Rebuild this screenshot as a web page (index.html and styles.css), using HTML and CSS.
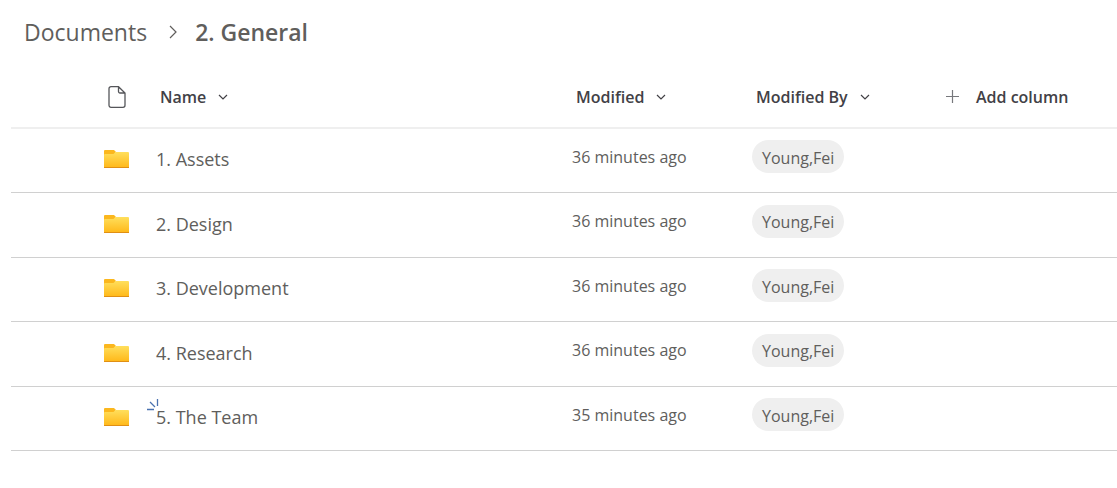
FILE: index.html
```html
<!DOCTYPE html>
<html lang="en">
<head>
  <meta charset="UTF-8">
  <meta name="viewport" content="width=device-width, initial-scale=1.0">
  <title>2. General</title>
  <link rel="stylesheet" href="styles.css">
</head>
<body>
  <svg class="sprite" aria-hidden="true">
    <defs>
      <linearGradient id="folder-fill" x1="0" y1="0" x2="0" y2="1">
        <stop offset="0" stop-color="#ffdf5c"/>
        <stop offset="1" stop-color="#ffb717"/>
      </linearGradient>
    </defs>
    <symbol id="chevron-down" viewBox="0 0 10 6">
      <path d="M1 1l4 4 4-4" fill="none" stroke="currentColor" stroke-width="1.2"/>
    </symbol>
    <symbol id="folder" viewBox="0 0 25 18">
      <path d="M1 0h9l1.500 1.500V6H0V1a1 1 0 0 1 1-1z" fill="#fbb71e"/>
      <path d="M1 4h8.500l2-2H24a1 1 0 0 1 1 1v15H0V5a1 1 0 0 1 1-1z" fill="url(#folder-fill)"/>
      <path d="M0 17h25v1H0z" fill="#e08f14"/>
    </symbol>
  </svg>

  <nav class="breadcrumb" aria-label="Breadcrumb">
    <a href="#">Documents</a>
    <svg class="crumb-arrow" viewBox="0 0 8 14" aria-hidden="true"><path d="M1 1l6 6-6 6" fill="none" stroke="currentColor" stroke-width="1.2"/></svg>
    <span class="current">2. General</span>
  </nav>

  <main class="list">
    <table class="files">
      <thead>
        <tr>
          <th class="col-icon">
            <button type="button" class="head-btn" aria-label="File type">
              <svg class="file-icon" viewBox="0 0 18 22" aria-hidden="true"><path d="M3 .7h7.500L17 7v12.300a2 2 0 0 1-2 2H3a2 2 0 0 1-2-2V2.700a2 2 0 0 1 2-2zM10.500.7V5.500a1.500 1.500 0 0 0 1.500 1.500H17" fill="none" stroke="#55565a" stroke-width="1.3"/></svg>
            </button>
          </th>
          <th class="col-name"><button type="button" class="head-btn">Name <svg class="chevron" aria-hidden="true"><use href="#chevron-down"/></svg></button></th>
          <th class="col-modified"><button type="button" class="head-btn">Modified <svg class="chevron" aria-hidden="true"><use href="#chevron-down"/></svg></button></th>
          <th class="col-by"><button type="button" class="head-btn">Modified By <svg class="chevron" aria-hidden="true"><use href="#chevron-down"/></svg></button></th>
          <th class="col-add"><button type="button" class="head-btn add-btn"><svg class="plus" viewBox="0 0 14 14" aria-hidden="true"><path d="M6.500 0v13M0 6.500h13" stroke="#77787c" stroke-width="1.2"/></svg>Add column</button></th>
        </tr>
      </thead>
      <tbody>
        <tr>
          <td class="col-icon"><svg class="folder" aria-hidden="true"><use href="#folder"/></svg></td>
          <td class="col-name"><a href="#">1. Assets</a></td>
          <td class="col-modified">36 minutes ago</td>
          <td class="col-by"><button type="button" class="person">Young,Fei</button></td>
          <td></td>
        </tr>
        <tr>
          <td class="col-icon"><svg class="folder" aria-hidden="true"><use href="#folder"/></svg></td>
          <td class="col-name"><a href="#">2. Design</a></td>
          <td class="col-modified">36 minutes ago</td>
          <td class="col-by"><button type="button" class="person">Young,Fei</button></td>
          <td></td>
        </tr>
        <tr>
          <td class="col-icon"><svg class="folder" aria-hidden="true"><use href="#folder"/></svg></td>
          <td class="col-name"><a href="#">3. Development</a></td>
          <td class="col-modified">36 minutes ago</td>
          <td class="col-by"><button type="button" class="person">Young,Fei</button></td>
          <td></td>
        </tr>
        <tr>
          <td class="col-icon"><svg class="folder" aria-hidden="true"><use href="#folder"/></svg></td>
          <td class="col-name"><a href="#">4. Research</a></td>
          <td class="col-modified">36 minutes ago</td>
          <td class="col-by"><button type="button" class="person">Young,Fei</button></td>
          <td></td>
        </tr>
        <tr>
          <td class="col-icon"><svg class="folder" aria-hidden="true"><use href="#folder"/></svg></td>
          <td class="col-name">
            <a href="#" class="is-new">
              <svg class="new-mark" viewBox="0 0 12 12" aria-hidden="true"><path d="M10.500 0v7M3 3l5 5M0 10.500h7" fill="none" stroke="#4a72b0" stroke-width="1.300"/></svg>5. The Team</a>
          </td>
          <td class="col-modified">35 minutes ago</td>
          <td class="col-by"><button type="button" class="person">Young,Fei</button></td>
          <td></td>
        </tr>
      </tbody>
    </table>
  </main>
</body>
</html>
```

FILE: styles.css
```css
body {
  margin: 0;
  font-family: 'Open Sans', 'Noto Sans', sans-serif;
  background: #ffffff;
  color: #605e5c;
}

a {
  color: inherit;
  text-decoration: none;
}

a:hover {
  text-decoration: underline;
}

button {
  border: none;
  background: none;
  padding: 0;
  font-family: inherit;
  color: inherit;
  cursor: pointer;
}

.sprite {
  position: absolute;
  width: 0;
  height: 0;
}

/* breadcrumb */
.breadcrumb {
  display: flex;
  align-items: center;
  height: 64px;
  padding: 0 0 2px 24px;
  font-size: 23px;
}

.crumb-arrow {
  width: 8px;
  height: 14px;
  margin: 0 18px 0 22px;
}

.current {
  font-weight: 600;
}

/* file list */
.list {
  padding-left: 11px;
}

.files {
  width: 100%;
  table-layout: fixed;
  border-spacing: 0;
}

.files tbody tr {
  height: 64px;
}

.files tbody tr:nth-child(even) {
  height: 65px;
}

.files th,
.files td {
  padding: 0 0 0 12px;
  text-align: left;
  white-space: nowrap;
}

.files th {
  height: 61px;
  padding-left: 16px;
  border-bottom: 2px solid #efefef;
}

.files td {
  padding-bottom: 8px;
  border-bottom: 1px solid #d0d0d0;
  font-size: 16px;
}

.files th.col-icon,
.files td.col-icon {
  width: 40px;
  padding-left: 93px;
}

.files th.col-modified,
.files th.col-by {
  width: 164px;
}

.files th.col-add {
  width: 171px;
  padding-left: 26px;
}

.files td.col-icon,
.files td.col-name {
  padding-bottom: 3px;
}

.files td.col-name {
  font-size: 18px;
}

.head-btn {
  display: flex;
  align-items: center;
  gap: 12px;
  font-size: 16px;
  font-weight: 600;
  color: #424146;
}

.add-btn {
  gap: 16px;
}

.chevron {
  width: 10px;
  height: 6px;
}

.plus {
  width: 14px;
  height: 14px;
}

.file-icon {
  width: 18px;
  height: 22px;
  margin-left: 4px;
}

.folder {
  display: block;
  width: 25px;
  height: 18px;
}

.person {
  height: 33px;
  padding: 2px 10px 0;
  border-radius: 17px;
  background: #efefef;
  font-size: 16px;
}

.is-new {
  position: relative;
}

.new-mark {
  position: absolute;
  top: -6px;
  left: -9px;
  width: 12px;
  height: 12px;
}
```
